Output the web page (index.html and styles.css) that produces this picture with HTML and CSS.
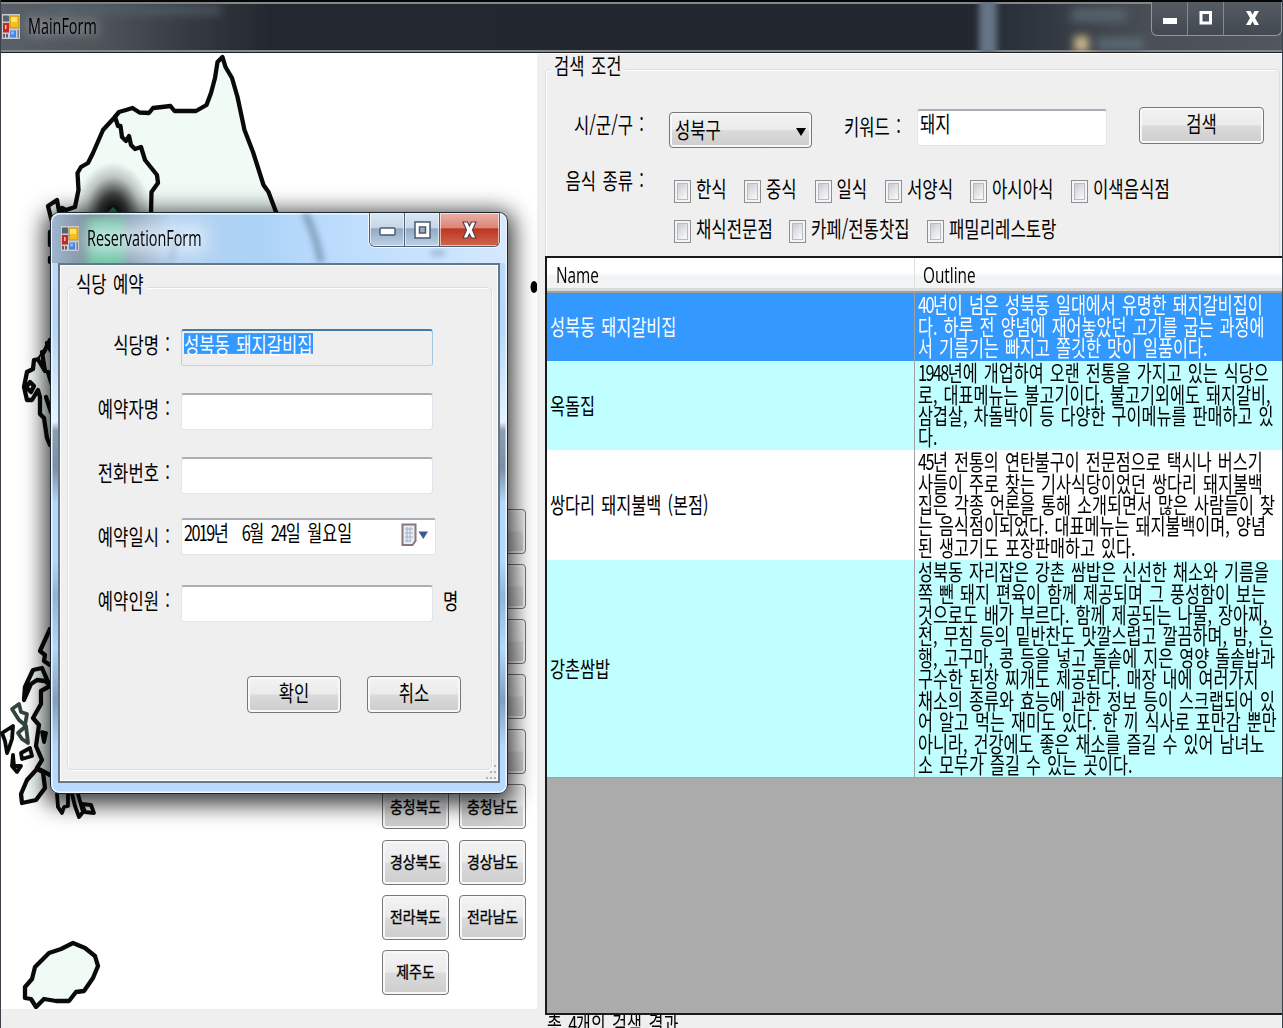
FILE: index.html
```html
<!DOCTYPE html>
<html lang="ko">
<head>
<meta charset="utf-8">
<title>MainForm</title>
<link rel="stylesheet" href="styles.css">
</head>
<body>
<svg class="defs" width="0" height="0">
  <symbol id="app" viewBox="0 0 18 25" preserveAspectRatio="none">
    <rect width="18" height="25" fill="#c9ccd0"/>
    <rect x="1" y="1.500" width="6" height="6" fill="#596170"/>
    <rect x="1" y="9" width="6" height="9.500" fill="#c5281d"/><rect x="3" y="11" width="1.500" height="4" fill="#fbb"/>
    <rect x="8" y="2" width="9" height="12" fill="#f6bd1c" stroke="#b07e0c" stroke-width=".7"/><rect x="9" y="3" width="6" height="5" fill="#ffe36a"/>
    <rect x="8" y="16.500" width="6" height="7" fill="#4684e8"/><rect x="9" y="17.500" width="3" height="3" fill="#8ab8ff"/>
    <rect x="1" y="20" width="2" height="3.500" fill="#596170"/><rect x="4" y="20" width="2" height="3.500" fill="#596170"/><rect x="15.500" y="16" width="1.500" height="8" fill="#77808e"/>
  </symbol>
</svg>
<div class="main">
  <header class="bar">
    <i class="smudge s1"></i><i class="smudge s2"></i><i class="smudge s3"></i><i class="smudge s4"></i><i class="smudge s5"></i>
    <svg class="appicon"><use href="#app"/></svg>
    <span class="wtitle">MainForm</span>
    <div class="wbtns dark">
      <span class="wb"><svg width="14" height="14"><rect x="0" y="7" width="14" height="6" fill="#fff"/></svg></span>
      <span class="wb"><svg width="14" height="16"><rect x="2" y="2.500" width="9.500" height="10.500" fill="none" stroke="#fff" stroke-width="3"/></svg></span>
      <span class="wb"><svg width="14" height="16"><path d="M0 1H4.500L6.500 4.800 8.500 1H13L9 8 13 15H8.500L6.500 11.200 4.500 15H0L4 8Z" fill="#fff"/></svg></span>
    </div>
  </header>
  <div class="body">
    <section class="map">
      <svg class="korea" width="537" height="956" viewBox="0 53 537 956">
        <defs><radialGradient id="glow"><stop offset="0" stop-color="#000"/><stop offset=".35" stop-color="#000" stop-opacity=".75"/><stop offset=".7" stop-color="#000" stop-opacity=".22"/><stop offset="1" stop-color="#000" stop-opacity="0"/></radialGradient></defs>
        <g fill="#f0fbf6" stroke="#0a0a0a" stroke-width="4.300" stroke-linejoin="round" stroke-linecap="round">
          <path d="M62 208L66 210 75 207 78.500 190 77.500 173 81 167 88 163 93 153 103 130 114 118 119 112 126 110 132.500 108 139.500 112.500 149 113 153 108 162 107 170.500 106 174.500 111 196 111 206.500 105 211 93 215 78 217.500 62 222.500 57 225.500 67 232 78 237.500 97 244.500 130 253 152 263.500 185 268.500 192 276 212 300 265V700L60 700 56 440Z"/>
          <path fill="none" d="M115 117L118 126 120.500 126 122 137 126 141 129 136 131 145 135 149 141 147 145 160 157 175 158 183 151.500 192 151 214"/>
          <path d="M48 206L57 200 59 211 60 222H52Z"/><path d="M50 232V245M50 258V262"/>
          <path d="M50 340L44 352 39 359 34 360 33 369 27 372 24 387 27 400 32 400 38 390 40 397 40 414 44 418 47 438 50 445"/>
          <path d="M42 352L45 371 39 361M47 343L51 351M27 386L30 382 34 386 31 392 27 388M48 372L52 385M46 397L51 412"/>
          <path d="M50 629L40 651 45 655 44 661 50 665"/>
          <path d="M24 700L25 687 33 670 42 668 49 684 45 681 37 680 31 684Z"/>
          <path d="M50 686L41 691 41 704 33 718 39 725 36 746 42 760 37 768 50 775"/>
          <path fill="none" stroke="#34453f" stroke-width="3.800" d="M12 709L19 704 21 712 27 714 25 725 19 720ZM18 733L26 726 28 743 22 739Z"/>
          <path stroke-width="3.800" d="M2 733L13 726 12 739 9 748 7 753 5 741ZM42 732L46 733 44 742ZM21 753L30 748 32 756 22 759ZM13 755L14 766 21 766 17 772 12 766Z"/>
          <path d="M37 769L43 772 45 788 36 800 22 803 21 794 27 780Z"/>
          <path stroke-width="3.800" d="M57 794L58 807 62 813 64 807 68 806 68 794M72 794L75 806 79 817 83 812 78 794M82 804L91 805 94 813 85 812Z"/>
          <path d="M25 987L32 979 35 967 49 953 61 949 73 943 85 948 95 956 98 966 93 978 84 991 76 992 69 1001 56 1001 44 999 36 1007 31 999 25 998Z"/>
        </g>
        <ellipse cx="534" cy="287" rx="3.500" ry="6" fill="#000"/>
        <ellipse cx="113" cy="212" rx="38" ry="50" fill="url(#glow)"/><path d="M108 212L113 207 118 212Z" fill="#1b7f50"/>
      </svg>
      <div class="regions">
        <b></b><b></b><b></b><b></b><b></b><b></b><b></b><b></b><b></b><b></b>
        <b><span>충청북도</span></b><b><span>충청남도</span></b>
        <b><span>경상북도</span></b><b><span>경상남도</span></b>
        <b><span>전라북도</span></b><b><span>전라남도</span></b>
        <b><span>제주도</span></b>
      </div>
    </section>
    <section class="right">
      <div class="search">
        <span class="legend t">검색 조건</span>
        <div class="row r1">
          <span class="lab t">시/군/구 :</span>
          <div class="combo btn"><span class="t">성북구</span><i class="arrow"></i></div>
          <span class="t kw">키워드 :</span>
          <div class="input key"><span class="t">돼지</span></div>
          <div class="btn find"><span class="t">검색</span></div>
        </div>
        <div class="row r2">
          <span class="lab t">음식 종류 :</span>
          <div class="checks">
            <div class="cl c1"><label><i></i><span class="t">한식</span></label><label><i></i><span class="t">중식</span></label><label><i></i><span class="t">일식</span></label><label><i></i><span class="t">서양식</span></label><label><i></i><span class="t">아시아식</span></label><label><i></i><span class="t">이색음식점</span></label></div>
            <div class="cl c2"><label><i></i><span class="t">채식전문점</span></label><label><i></i><span class="t">카페/전통찻집</span></label><label><i></i><span class="t">패밀리레스토랑</span></label></div>
          </div>
        </div>
      </div>
      <div class="grid">
        <div class="gr head"><div><span class="t n">Name</span></div><div><span class="t n">Outline</span></div></div>
        <div class="gr g1"><div><span class="t">성북동 돼지갈비집</span></div><div><p class="t"><s>40</s>년이 넘은 성북동 일대에서 유명한 돼지갈비집이<br>다. 하루 전 양념에 재어놓았던 고기를 굽는 과정에<br>서 기름기는 빠지고 쫄깃한 맛이 일품이다.</p></div></div>
        <div class="gr g2"><div><span class="t">옥돌집</span></div><div><p class="t"><s>1948</s>년에 개업하여 오랜 전통을 가지고 있는 식당으<br>로, 대표메뉴는 불고기이다. 불고기외에도 돼지갈비,<br>삼겹살, 차돌박이 등 다양한 구이메뉴를 판매하고 있<br>다.</p></div></div>
        <div class="gr g3"><div><span class="t">쌍다리 돼지불백 (본점)</span></div><div><p class="t"><s>45</s>년 전통의 연탄불구이 전문점으로 택시나 버스기<br>사들이 주로 찾는 기사식당이었던 쌍다리 돼지불백<br>집은 각종 언론을 통해 소개되면서 많은 사람들이 찾<br>는 음식점이되었다. 대표메뉴는 돼지불백이며, 양념<br>된 생고기도 포장판매하고 있다.</p></div></div>
        <div class="gr g4"><div><span class="t">강촌쌈밥</span></div><div><p class="t">성북동 자리잡은 강촌 쌈밥은 신선한 채소와 기름을<br>쪽 뺀 돼지 편육이 함께 제공되며 그 풍성함이 보는<br>것으로도 배가 부르다. 함께 제공되는 나물, 장아찌,<br>전, 무침 등의 밑반찬도 맛깔스럽고 깔끔하며, 밤, 은<br>행, 고구마, 콩 등을 넣고 돌솥에 지은 영양 돌솥밥과<br>구수한 된장 찌개도 제공된다. 매장 내에 여러가지<br>채소의 종류와 효능에 관한 정보 등이 스크랩되어 있<br>어 알고 먹는 재미도 있다. 한 끼 식사로 포만감 뿐만<br>아니라, 건강에도 좋은 채소를 즐길 수 있어 남녀노<br>소 모두가 즐길 수 있는 곳이다.</p></div></div>
      </div>
      <div class="status"><span class="t">총 <s>4</s>개의 검색 결과</span></div>
    </section>
  </div>
</div>
<div class="dialog">
  <header class="dbar">
    <i class="tint"></i><i class="halo"></i>
    <svg class="streaks" width="456" height="50"><g fill="none" stroke="#49637c" stroke-width="7" opacity=".5"><path d="M225 0Q237 25 241 50"/><path d="M97 20L91 50" stroke-width="4" opacity=".5"/><path d="M358 38V42" stroke-width="14"/></g></svg>
    <svg class="appicon"><use href="#app"/></svg>
    <span class="wtitle">ReservationForm</span>
    <div class="wbtns light">
      <span class="wb"><svg width="17" height="12"><rect x="1" y="4" width="15" height="7" rx="1" fill="#fff" stroke="#4a5a70" stroke-width="1.500"/></svg></span>
      <span class="wb"><svg width="17" height="18"><path fill-rule="evenodd" d="M1 1H16V17H1ZM5.500 6V12H11.500V6Z" fill="#fff" stroke="#4a5a70" stroke-width="1.500"/></svg></span>
      <span class="wb close"><svg width="15" height="18"><path d="M1 1H5.500L7.500 5 9.500 1H14L10.500 9 14 17H9.500L7.500 13 5.500 17H1L4.500 9Z" fill="#fff" stroke="#53424c" stroke-width="1.200"/></svg></span>
    </div>
  </header>
  <div class="client">
    <div class="group">
      <span class="legend t">식당 예약</span>
      <div class="f"><span class="t">식당명 :</span><div class="input ro"><span class="sel t">성북동 돼지갈비집</span></div></div>
      <div class="f"><span class="t">예약자명 :</span><div class="input"></div></div>
      <div class="f"><span class="t">전화번호 :</span><div class="input"></div></div>
      <div class="f"><span class="t">예약일시 :</span><div class="input date"><span class="t"><s>2019</s>년&nbsp; <s>6</s>월 <s>24</s>일 월요일</span>
        <svg width="28" height="24"><path d="M1.500 1.500H14.500V18L11.500 22H1.500Z" fill="#e8edf5" stroke="#87797a" stroke-width="2"/><path d="M4 6H12M4 10H12M4 14H12M4 18H10M6 4V19M9 4V19" stroke="#9eb0ca" stroke-width="1"/><path d="M17.500 8.500H27L22.300 16Z" fill="#3c5a91"/></svg></div></div>
      <div class="f"><span class="t">예약인원 :</span><div class="input"></div><span class="t unit">명</span></div>
      <div class="acts"><div class="btn"><span class="t">확인</span></div><div class="btn"><span class="t">취소</span></div></div>
    </div>
    <svg class="grip" width="12" height="16" fill="#b2b2b2"><path d="M9 1h2v2h-2zM5 7h2v2h-2zM9 7h2v2h-2zM1 13h2v2h-2zM5 13h2v2h-2zM9 13h2v2h-2z"/></svg>
  </div>
</div>
</body>
</html>
```
FILE: styles.css
```css
* { box-sizing: border-box; }
body { margin: 0; width: 1283px; height: 1028px; overflow: hidden; position: relative; background: #efefef; color: #000; font-family: "Noto Sans CJK KR", sans-serif; }
.defs { position: absolute; }
s { text-decoration: none; letter-spacing: -1.6px; }

/* tall, narrow lettering of the stretched form font */
.t { display: inline-block; font-size: 16.6px; line-height: 16px; word-spacing: 1.8px; white-space: nowrap; transform: translateY(-1.500px) scaleY(1.3); }

.main { height: 1028px; display: flex; flex-direction: column; border-left: 1px solid #3b4148; border-right: 1px solid #3b4148; }
.bar { position: relative; height: 53px; flex: none; display: flex; align-items: center; padding-left: 1px; overflow: hidden; background: linear-gradient(90deg, #596067 0, #4e545a 100px, #353a40 190px, #23272f 270px, #22262e 960px, #303740 1040px, #4a4f55 1150px, #52575d); border-top: 2px solid #060606; border-bottom: 1px solid #1c1e20; box-shadow: inset 0 2px 0 #85888b, inset 0 -2px 0 #85888b; }
.smudge { position: absolute; filter: blur(5px); background: #5c6975; }
.s1 { left: 40px; top: 3px; width: 180px; height: 10px; opacity: .55; }
.s2 { left: 978px; top: -5px; width: 18px; height: 65px; background: #657487; filter: blur(3px); }
.s3 { left: 1070px; top: 6px; width: 56px; height: 14px; opacity: .8; }
.s4 { left: 1073px; top: 34px; width: 15px; height: 16px; background: #c9b68b; filter: blur(4px); }
.s5 { left: 1095px; top: 36px; width: 48px; height: 12px; }
.bar .appicon { top: -1px; }
.appicon { position: relative; width: 18px; height: 25px; flex: none; }
.wtitle { position: relative; font: 15px "Open Sans", "Noto Sans", sans-serif; line-height: 20px; transform: scale(.96, 1.4); transform-origin: left center; margin-left: 8px; white-space: nowrap; }
.bar .wtitle { text-shadow: 0 0 9px #bbb, 0 0 14px #aaa; top: -1px; }

.wbtns { display: flex; margin-left: auto; align-self: flex-start; position: relative; }
.wb { display: flex; align-items: center; justify-content: center; }
.dark { width: 131px; height: 34px; border: 1px solid #94979a; border-top: 0; border-radius: 0 0 6px 6px; background: linear-gradient(#555b63, #434951); }
.dark .wb { width: 36px; border-right: 1px solid #858a90; padding-bottom: 2px; }
.dark .wb:last-child { flex: 1; border: 0; }

.body { flex: 1; display: flex; min-height: 0; }
.map { position: relative; width: 536px; height: 956px; background: #fff; padding: 456px 0 0 381px; flex: none; }
.korea { position: absolute; left: -1px; top: 0; }
.regions { position: relative; display: grid; grid-template-columns: 67px 67px; grid-auto-rows: 45px; gap: 10.1px; }
.btn, .regions b { display: flex; align-items: center; justify-content: center; border: 1.5px solid #777; border-radius: 4px; background: linear-gradient(#f3f3f3, #ebebeb 48%, #dadada 52%, #cdcdcd); box-shadow: inset 0 0 0 2px #f8f8f8; }
.regions span { font-size: 13.9px; font-weight: 400; -webkit-text-stroke: .35px #000; transform: translateY(-1px) scaleY(1.12); white-space: nowrap; }

.right { flex: 1; display: flex; flex-direction: column; padding-left: 8px; min-width: 0; border-top: 1px solid #fff; }
.search { position: relative; height: 202px; flex: none; }
.search::before { content: ""; position: absolute; inset: 15px 2px 0 0; border: 1px solid #d5dfe8; border-bottom: 0; border-radius: 5px 5px 0 0; box-shadow: inset 1px 1px 0 #fff; }
.legend { position: absolute; background: #efefef; padding: 0 3px; }
.search .legend { left: 6px; top: 4px; }
.row { position: relative; display: flex; }
.lab { width: 99px; text-align: right; flex: none; }
.r1 { padding-top: 53px; height: 111px; align-items: flex-start; }
.r1 .lab { margin-top: 10px; }
.combo { width: 143px; height: 36px; margin: 5px 0 0 25px; justify-content: space-between; padding: 0 5px 1px 5px; flex: none; }
.arrow { border: 5.500px solid transparent; border-top: 8px solid #000; border-bottom: 0; margin-top: 4px; }
.kw { margin: 12px 0 0 32px; width: 73px; flex: none; }
.input { height: 37px; border: 1px solid #dfe5ed; border-top: 2px solid #abadb6; border-radius: 3px; background: #fff; padding: 5px 2px; flex: none; line-height: 0; }
.key { width: 190px; margin-top: 2px; }
.find { width: 125px; height: 37px; margin-left: 32px; flex: none; padding-bottom: 3px; }
.r2 .lab { margin-top: 17px; }
.checks { margin-left: 30px; padding-top: 14px; }
.cl { display: grid; height: 39.500px; align-items: start; }
.c1 { grid-template-columns: 70px 70.500px 70.500px 85px 101px 110px; }
.c2 { grid-template-columns: 115px 138px 150px; }
.cl label { display: flex; }
.cl i { width: 17px; height: 23px; margin-top: 1px; border: 1px solid #8e8f8f; background: linear-gradient(135deg, #c8ccd3, #fbfbfb) content-box, #f4f4f4; padding: 3px; box-shadow: inset 0 0 0 2px #f4f4f4, inset 0 0 0 3px #b8bcc2; }
.cl .t { margin: 3px 0 0 5px; font-size: 16.7px; }

.grid { height: 759px; border: 2px solid #1a1a1a; border-right: 0; background: #ababab; flex: none; }
.gr { display: grid; grid-template-columns: 368px 1fr; }
.gr > div { display: flex; align-items: center; padding-left: 3px; border-right: 1px solid #a0a0a0; }
.gr > div:last-child { border-right: 0; }
.gr > div:nth-child(2) { align-items: flex-start; padding-left: 3px; }
.gr .t { font-size: 16.35px; word-spacing: 1.5px; transform: translateY(-1.500px) scaleY(1.34); }
.gr p.t { margin: 0; font-size: 16.3px; transform: scaleY(1.34); transform-origin: top; }
.head { height: 35px; background: linear-gradient(#fff 45%, #f3f4f6 55%, #f1f2f4); border-bottom: 2px solid #a0a0a0; box-shadow: inset 0 -3px 0 #d8d9db; }
.head > div { border-color: #dedfe1; padding-left: 9px; }
.head > div:nth-child(2) { align-items: center; padding-left: 8px; }
.gr .n { font-family: "Open Sans", sans-serif; transform: scale(.94, 1.34); transform-origin: left center; }
.g1 { height: 68px; background: #3399ff; color: #fff; }
.g2 { height: 89px; background: #c0ffff; }
.g3 { height: 110px; background: #fff; }
.g4 { height: 218px; background: #c0ffff; border-bottom: 1px solid #a0a0a0; }
.status { flex: 1; overflow: hidden; padding-left: 2px; line-height: 0; }
.status .t { font-size: 16.3px; transform: scaleY(1.34); }

.dialog { position: absolute; left: 50px; top: 212px; width: 458px; height: 582px; border: 1px solid #1b2530; border-radius: 9px; padding: 0 7px 10px; display: flex; flex-direction: column; box-shadow: inset 0 0 0 1.500px #eef7ff, 0 5px 22px 6px rgba(0,0,0,.75); background: linear-gradient(180deg, #bfdcf8 0, #b5d6f5 20%, #e6f3ff 36%, #8d9eb0 37.500%, #7b8fa5 44%, #b4d8fb 50%, #b4d8fb 60%, #8fb5da 66%, #b4d8fb 75%, #82a0bd 84%, #b4d8fb 92%, #b8dbff); }
.dbar { position: relative; height: 50px; flex: none; margin: 0 -6px; display: flex; align-items: center; padding-left: 9px; overflow: hidden; border-radius: 8px 8px 0 0; background: linear-gradient(90deg, #9fb6ce 0, #7d8c9b 40px, #8fa3b6 75px, #b5d2ef 120px, #abd3f6 210px, #b9dafc 260px, #d4e8ff); box-shadow: inset 0 1.500px 0 #eef7ff; }
.tint { position: absolute; left: 35px; top: 5px; width: 38px; height: 55px; background: #70c5a5; filter: blur(5px); }
.halo { position: absolute; left: 35px; top: 12px; width: 120px; height: 28px; background: rgba(240,248,255,.6); filter: blur(8px); }
.streaks { position: absolute; left: 28px; top: 0; filter: blur(3px); }
.light { height: 34px; margin-right: 6px; border: 1px solid #4f6074; border-top: 0; border-radius: 0 0 6px 6px; overflow: hidden; box-shadow: 0 0 0 1px #eef6ff; }
.light .wb { width: 35px; background: linear-gradient(#dae7f4 0, #c6d6e7 45%, #92a9c3 48%, #bed2e7); border-right: 1px solid #4f6074; box-shadow: inset 0 0 0 1px rgba(255,255,255,.6); }
.light .close { width: 59px; border: 0; background: linear-gradient(#eab1a7 0, #dc8476 45%, #bd3522 48%, #d1664b); }
.client { position: relative; flex: 1; border: 2px solid #657789; box-shadow: inset 0 0 0 1px #fff; background: #efefef; padding: 22px 6px 10px 7px; }
.group { position: relative; height: 483px; border: 1px solid #d3dfe9; border-radius: 5px; box-shadow: inset 1px 1px 0 #fff, 1px 1px 0 #fff; padding-top: 27px; }
.group .legend { left: 5px; top: -12px; }
.f { height: 64px; display: flex; align-items: center; }
.f > .t:first-child { width: 102px; text-align: right; margin: 0 11px 5px 0; flex: none; }
.f .input { width: 252px; }
.f .ro { background: #efefef; border-color: #3d7bad #a4c9e3 #b7d9ed #b5cfe7; }
.sel { background: #3399ff; color: #fff; transform: translateY(-.5px) scaleY(1.3); }
.f .date { width: 255px; margin-bottom: 5px; display: flex; justify-content: space-between; padding: 5px 6px 5px 2px; }
.date .t { font-size: 16.3px; word-spacing: 2px; margin-top: 1px; }
.date svg { flex: none; margin-top: -2px; }
.f .unit { margin: 0 0 5px 10px; }
.acts { display: flex; gap: 26px; margin: 41px 0 0 179px; }
.acts .btn { width: 94px; height: 37px; padding-bottom: 3px; }
.grip { position: absolute; right: 1px; bottom: 1px; }
```
